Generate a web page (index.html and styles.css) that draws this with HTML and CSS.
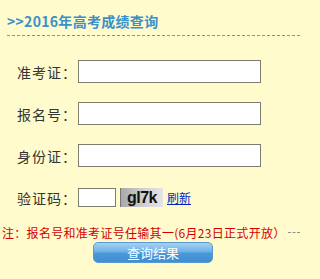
FILE: index.html
```html
<!DOCTYPE html>
<html lang="zh-CN">
<head>
<meta charset="utf-8">
<title>2016年高考成绩查询</title>
<link rel="stylesheet" href="styles.css">
</head>
<body>
<div class="page">
  <h1 class="title">&gt;&gt;2016年高考成绩查询</h1>
  <div class="rule"></div>
  <form class="form">
    <div class="row">
      <label class="label">准考证：</label>
      <input class="field" type="text">
    </div>
    <div class="row">
      <label class="label">报名号：</label>
      <input class="field" type="text">
    </div>
    <div class="row">
      <label class="label">身份证：</label>
      <input class="field" type="text">
    </div>
    <div class="row">
      <label class="label">验证码：</label>
      <input class="code" type="text">
      <span class="captcha">gl7k</span>
      <a class="refresh" href="#">刷新</a>
    </div>
    <div class="note-row">
      <span class="note">注：报名号和准考证号任输其一(6月23日正式开放）</span>
      <span class="note-dash"></span>
    </div>
    <div class="btn-row">
      <button class="submit" type="button">查询结果</button>
    </div>
  </form>
</div>
</body>
</html>
```
FILE: styles.css
```css
html, body {
  margin: 0;
  padding: 0;
  background: #fffbcc;
}
body {
  font-family: "Noto Sans CJK SC", "Noto Sans", sans-serif;
  width: 300px;
  height: 279px;
  overflow: hidden;
}
.title {
  margin: 12px 0 0 7px;
  font-size: 14px;
  line-height: 19px;
  font-weight: bold;
  letter-spacing: 0.3px;
  color: #3b90c9;
}
.rule {
  margin: 4px 0 0 7px;
  border-top: 1px dashed #8f8f8f;
}
.form {
  margin: 24px 0 0 0;
  display: flex;
  flex-direction: column;
}
.row {
  display: flex;
  align-items: center;
  height: 23px;
  margin-bottom: 19px;
}
.row:nth-child(4) {
  margin-bottom: 0;
}
.label {
  width: 77px;
  text-align: right;
  font-size: 14px;
  letter-spacing: 1px;
  color: #333;
  flex: none;
}
.field {
  box-sizing: border-box;
  width: 183px;
  height: 23px;
  margin: 0 0 0 1px;
  border: 1px solid #7d7d6d;
  background: #fff;
  padding: 0;
}
.code {
  box-sizing: border-box;
  width: 38px;
  height: 19px;
  margin: 0 0 0 1px;
  border: 1px solid #7d7d6d;
  background: #fff;
  padding: 0;
}
.captcha {
  box-sizing: border-box;
  margin-left: 4px;
  width: 43px;
  height: 19px;
  border-left: 1px solid #777;
  background: linear-gradient(to right, #a9a9a9, #d4d4d4 60%, #e4e4e4);
  font-family: "Liberation Sans", sans-serif;
  font-weight: bold;
  font-size: 16px;
  line-height: 19px;
  letter-spacing: -0.5px;
  text-align: center;
  color: #111;
}
.refresh {
  margin-left: 4px;
  font-size: 12px;
  color: #0a1fc4;
  text-decoration: underline;
}
.note-row {
  display: flex;
  align-items: center;
  margin-top: 16px;
  padding-left: 2px;
  height: 16px;
}
.note {
  font-size: 12px;
  line-height: 16px;
  letter-spacing: 0.3px;
  color: #d40000;
  white-space: nowrap;
}
.note-dash {
  flex: 1;
  margin-left: 2px;
  margin-top: -2px;
  border-top: 1px dashed #8f8f8f;
}
.btn-row {
  display: flex;
  padding-left: 93px;
  margin-top: 1px;
}
.submit {
  width: 120px;
  height: 21px;
  border: 1px solid #5a98cf;
  border-radius: 5px;
  background: linear-gradient(to bottom, #a6d2f3 0%, #6fb1e6 45%, #4a98da 55%, #3f8fd3 100%);
  color: #fff;
  font-family: "Noto Sans CJK SC", sans-serif;
  font-size: 13px;
  line-height: 19px;
  padding: 0;
  letter-spacing: 0;
}
```
